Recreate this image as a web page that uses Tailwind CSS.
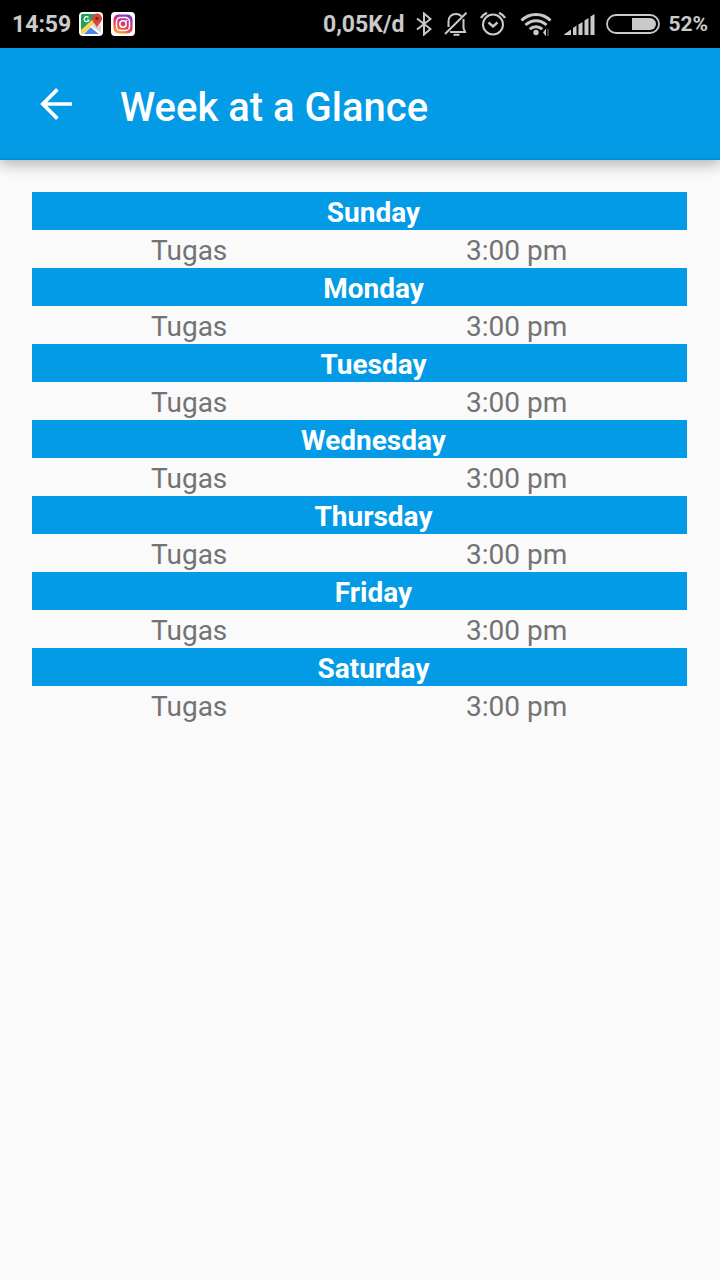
<!DOCTYPE html>
<html lang="en">
<head>
    <meta charset="UTF-8">
    <meta name="viewport" content="width=device-width, initial-scale=1.0">
    <title>Week at a Glance</title>
    <!-- Tailwind CSS CDN -->
    <script src="https://cdn.jsdelivr.net/npm/@tailwindcss/browser@4"></script>
</head>
<body class="min-h-screen bg-[#fafafa] font-['Roboto',sans-serif]">

    <!-- Status bar -->
    <div class="flex h-12 items-center justify-between bg-black px-3 text-[23px] font-bold text-[#cacaca]">
        <div class="flex items-center gap-2">
            <span class="pt-0.5">14:59</span>
            <!-- Maps -->
            <svg class="size-6" viewBox="0 0 24 24">
                <rect width="24" height="24" rx="4" fill="#fff"/>
                <path d="M3 2h12l3 8-14 12a2 2 0 0 1-2-2V3z" fill="#1fa15d"/>
                <path d="M2 20 17 6l2 4L5 22H3z" fill="#fff"/>
                <path d="M2 18 14 7l2 4L4 22a2 2 0 0 1-2-2z" fill="#ffd34d"/>
                <path d="M5 22l7-7 8 7z" fill="#4a86ee"/>
                <path d="M13 14l5-4 4 4v7z" fill="#d5d8da"/>
                <path d="M11 14l10 8" stroke="#fff" stroke-width="1.5"/>
                <path d="M18 16c-.5-4-5-5-5-9.500a5 5 0 0 1 10 0c0 4.500-4.500 5.500-5 9.500z" fill="#dc4437"/>
                <circle cx="18" cy="6.500" r="1.700" fill="#7d2a23"/>
                <path d="M9.500 5.500A2.500 2.500 0 1 0 10 8H8" fill="none" stroke="#fff" stroke-width="1.200"/>
            </svg>
            <!-- Instagram -->
            <svg class="size-6" viewBox="0 0 24 24">
                <defs>
                    <linearGradient id="insta" x1="0.200" y1="1" x2="0.700" y2="0">
                        <stop offset="0" stop-color="#fbb040"/>
                        <stop offset="0.350" stop-color="#ee4a4a"/>
                        <stop offset="0.650" stop-color="#c9308c"/>
                        <stop offset="1" stop-color="#7340c4"/>
                    </linearGradient>
                </defs>
                <rect width="24" height="24" rx="4" fill="#fff"/>
                <rect x="2.500" y="2.500" width="19" height="19" rx="5" fill="url(#insta)"/>
                <rect x="5.500" y="5.500" width="13" height="13" rx="4" fill="none" stroke="#fff" stroke-width="1.500"/>
                <circle cx="12" cy="12" r="3.200" fill="none" stroke="#fff" stroke-width="1.500"/>
                <circle cx="15.600" cy="8.400" r="0.900" fill="#fff"/>
            </svg>
        </div>

        <div class="flex items-center">
            <span class="pt-0.5">0,05K/d</span>
            <!-- Bluetooth -->
            <svg class="ml-3 h-6 w-4" viewBox="0 0 16 24" fill="none" stroke="currentColor" stroke-width="2">
                <path d="M1 6.500 14.500 17 8 22.500V1.500L14.500 7 1 17.500"/>
            </svg>
            <!-- Muted bell -->
            <svg class="ml-3 h-6 w-6" viewBox="0 0 24 24" fill="none" stroke="currentColor" stroke-width="2">
                <path d="M4.500 15V9.500C4.500 4.800 7.500 2 12 2c2.500 0 4.300.8 5.500 2.500M19.500 7v9l1.500 4H6"/>
                <path d="M22.500.8 1 22"/>
                <path d="M9.500 22.800h6"/>
            </svg>
            <!-- Alarm -->
            <svg class="ml-3 h-6 w-6.5" viewBox="0 0 26 24" fill="none" stroke="currentColor" stroke-width="2">
                <circle cx="13" cy="12.500" r="10"/>
                <path d="M8.500 10.500l4.500 4 4.500-4" stroke-width="2.400"/>
                <path d="M1 6Q3 2.500 7 .9M25 6Q23 2.500 19 .9" stroke-width="2.400"/>
            </svg>
            <!-- Wi-Fi -->
            <svg class="ml-3.5 h-6 w-8" viewBox="0 0 32 24" fill="none" stroke="currentColor" stroke-width="3">
                <path d="M1.500 8.500a20.500 20.500 0 0 1 29 0"/>
                <path d="M5.500 13a15 15 0 0 1 21 0"/>
                <path d="M9.800 17.200a9 9 0 0 1 12.400 0"/>
                <circle cx="16" cy="20.500" r="2.700" fill="currentColor" stroke="none"/>
                <path d="M23 20.500l3-4v8z" fill="currentColor" stroke="none"/>
                <path d="M28 17v7" stroke="#555" stroke-width="1.500"/>
            </svg>
            <!-- Signal -->
            <svg class="ml-3 h-6 w-8" viewBox="0 0 32 24" fill="currentColor">
                <path d="M0 22.500l7-5v5.500H0zM9 16l3.500-2.500V23H9zM14.500 12.500l4-2.500v13h-4zM20.500 8.500l4-2.500v17h-4zM26.500 4.500l4-2.500v21h-4z"/>
            </svg>
            <!-- Battery -->
            <svg class="ml-2.5 h-6 w-13.5" viewBox="0 0 54 24">
                <rect x="1" y="3" width="52" height="18" rx="9" fill="none" stroke="currentColor" stroke-width="1.800"/>
                <path d="M26 6h18a6 6 0 0 1 0 12H26z" fill="currentColor"/>
            </svg>
            <span class="ml-2 pt-0.5 text-[21px]">52%</span>
        </div>
    </div>

    <!-- App bar -->
    <header class="flex h-28 items-center bg-[#039be5] px-10 text-white shadow-[inset_0_-2px_0_rgba(0,0,0,0.07),0_4px_14px_rgba(0,0,0,0.3)]">
        <a href="#" aria-label="Back">
            <svg class="size-8" viewBox="0 0 32 32" fill="none" stroke="currentColor" stroke-width="3.700">
                <path d="M32 16H3M17.400 1.400 2.800 16l14.600 14.600"/>
            </svg>
        </a>
        <h1 class="ml-12 pt-2 text-[40px] leading-[56px] font-medium">Week at a Glance</h1>
    </header>

    <!-- Schedule -->
    <main class="py-8 pl-8 pr-[33px]">
        <table class="w-full table-fixed text-center text-[28px] leading-[34px] text-[#737373]">
            <colgroup>
                <col class="w-[48%]">
                <col class="w-[52%]">
            </colgroup>
            <tbody>
                <tr class="bg-[#039be5] text-white"><th colspan="2" class="pb-0 pl-7 pr-0 pt-1 font-bold">Sunday</th></tr>
                <tr><td class="px-0 pb-0 pt-1">Tugas</td><td class="px-0 pb-0 pt-1">3:00 pm</td></tr>
                <tr class="bg-[#039be5] text-white"><th colspan="2" class="pb-0 pl-7 pr-0 pt-1 font-bold">Monday</th></tr>
                <tr><td class="px-0 pb-0 pt-1">Tugas</td><td class="px-0 pb-0 pt-1">3:00 pm</td></tr>
                <tr class="bg-[#039be5] text-white"><th colspan="2" class="pb-0 pl-7 pr-0 pt-1 font-bold">Tuesday</th></tr>
                <tr><td class="px-0 pb-0 pt-1">Tugas</td><td class="px-0 pb-0 pt-1">3:00 pm</td></tr>
                <tr class="bg-[#039be5] text-white"><th colspan="2" class="pb-0 pl-7 pr-0 pt-1 font-bold">Wednesday</th></tr>
                <tr><td class="px-0 pb-0 pt-1">Tugas</td><td class="px-0 pb-0 pt-1">3:00 pm</td></tr>
                <tr class="bg-[#039be5] text-white"><th colspan="2" class="pb-0 pl-7 pr-0 pt-1 font-bold">Thursday</th></tr>
                <tr><td class="px-0 pb-0 pt-1">Tugas</td><td class="px-0 pb-0 pt-1">3:00 pm</td></tr>
                <tr class="bg-[#039be5] text-white"><th colspan="2" class="pb-0 pl-7 pr-0 pt-1 font-bold">Friday</th></tr>
                <tr><td class="px-0 pb-0 pt-1">Tugas</td><td class="px-0 pb-0 pt-1">3:00 pm</td></tr>
                <tr class="bg-[#039be5] text-white"><th colspan="2" class="pb-0 pl-7 pr-0 pt-1 font-bold">Saturday</th></tr>
                <tr><td class="px-0 pb-0 pt-1">Tugas</td><td class="px-0 pb-0 pt-1">3:00 pm</td></tr>
            </tbody>
        </table>
    </main>

</body>
</html>
